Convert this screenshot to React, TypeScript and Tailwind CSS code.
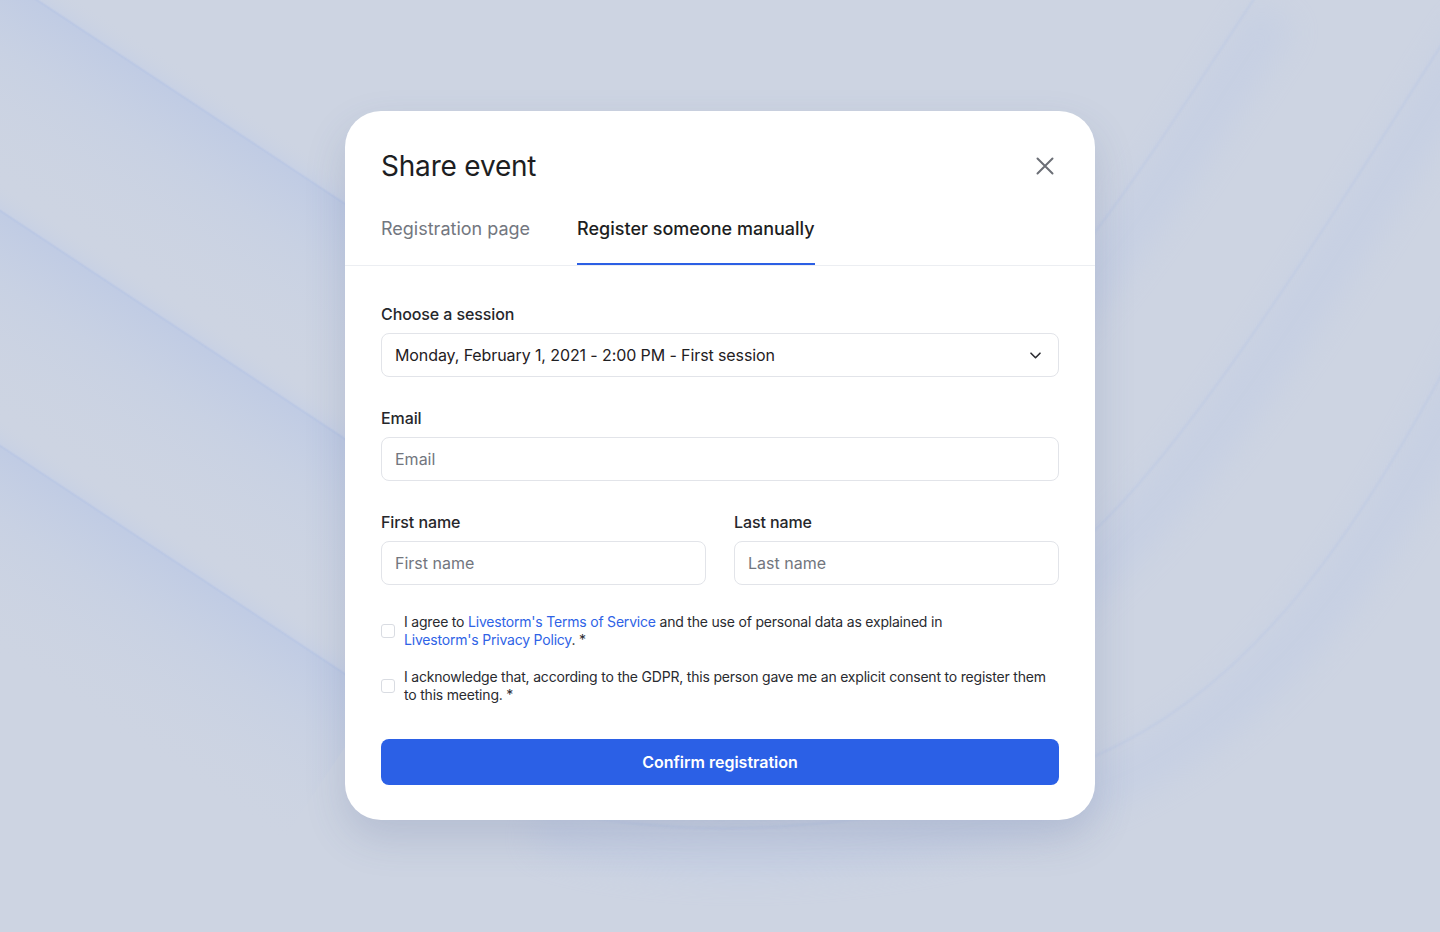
import { useState } from 'react'

const FONT = { fontFamily: 'Inter, "Noto Sans", sans-serif' }

function Backdrop() {
  return (
    <svg className="absolute inset-0 h-full w-full" viewBox="0 0 1440 932" preserveAspectRatio="none">
      <defs>
        <linearGradient id="band" x1="0" y1="0" x2="0" y2="1">
          <stop offset="0" stopColor="#b3c3e6" stopOpacity="0.5" />
          <stop offset="0.35" stopColor="#bccae6" stopOpacity="0.28" />
          <stop offset="1" stopColor="#cdd4e2" stopOpacity="0" />
        </linearGradient>
        <linearGradient id="ledge" x1="0" y1="0" x2="0" y2="1">
          <stop offset="0" stopColor="#cdd4e2" stopOpacity="0" />
          <stop offset="1" stopColor="#c4cfe6" stopOpacity="0.6" />
        </linearGradient>
        <filter id="soft" x="-20%" y="-20%" width="140%" height="140%">
          <feGaussianBlur stdDeviation="16" />
        </filter>
        <filter id="hair" x="-5%" y="-5%" width="110%" height="110%">
          <feGaussianBlur stdDeviation="0.8" />
        </filter>
      </defs>

      {/* left diagonal sheets */}
      <g transform="rotate(33.5)">
        {[-21, 175, 371].map(y => (
          <g key={y}>
            <rect x={-400} y={y - 24} width={1100} height={24} fill="url(#ledge)" />
            <rect x={-400} y={y} width={1100} height={180} fill="url(#band)" />
            <rect x={-400} y={y} width={1100} height={1.2} fill="#aebfe4" opacity="0.65" filter="url(#hair)" />
          </g>
        ))}
      </g>

      {/* right sweeping curves */}
      {[
        'M 900 420 C 1000 350 1060 280 1095 232 C 1150 160 1200 80 1260 -10',
        'M 700 760 C 900 720 1000 620 1095 530 C 1200 430 1330 220 1470 0',
        'M 520 800 C 650 845 900 840 1095 756 C 1250 690 1370 530 1500 260',
      ].map(d => (
        <g key={d}>
          <path d={d} fill="none" stroke="#b9c7e6" strokeWidth="50" opacity="0.3" filter="url(#soft)" transform="translate(16 24)" />
          <path d={d} fill="none" stroke="#b2c2e4" strokeWidth="1.2" opacity="0.6" filter="url(#hair)" />
        </g>
      ))}
    </svg>
  )
}

function Label({ children }: { children: React.ReactNode }) {
  return <div className="text-base leading-6 font-medium tracking-[-0.1px] text-[#26272b]">{children}</div>
}

function TextInput({ placeholder }: { placeholder: string }) {
  return (
    <input
      placeholder={placeholder}
      className="mt-[7px] h-[44px] w-full rounded-lg border border-[#e2e4e9] bg-white pl-[13px] text-base text-[#1f2023] outline-none placeholder:text-[#72767e]"
      style={FONT}
    />
  )
}

function Check({ children }: { children: React.ReactNode }) {
  return (
    <label className="flex items-center gap-[9px]">
      <span className="h-[14px] w-[14px] shrink-0 rounded-[3px] border border-[#d9dce2] bg-white" />
      <span className="text-sm leading-[18px] tracking-[-0.2px] text-[#2a2b30]">{children}</span>
    </label>
  )
}

export default function App() {
  const [tab, setTab] = useState(1)
  const tabs = ['Registration page', 'Register someone manually']

  return (
    <div className="relative flex h-[932px] w-full items-start justify-center overflow-hidden bg-[#cdd4e2] pt-[111px]" style={FONT}>
      <Backdrop />

      <div className="relative w-[750px] rounded-[36px] bg-white shadow-[0_18px_40px_rgba(70,90,140,0.18)]">
        <div className="border-b border-[#eceef2] px-9 pt-[38px]">
          <div className="flex items-center justify-between">
            <h1 className="text-[28px] leading-[34px] font-normal tracking-[-0.2px] text-[#1d1e22]">Share event</h1>
            <button className="mr-[2px] flex h-6 w-6 items-center justify-center text-[#6c6f76]">
              <svg width="18" height="18" viewBox="0 0 18 18" fill="none" stroke="currentColor" strokeWidth="2" strokeLinecap="round">
                <path d="M1.5 1.5l15 15M16.5 1.5l-15 15" />
              </svg>
            </button>
          </div>
          <div className="mt-[34px] flex gap-[47px]">
            {tabs.map((t, i) => (
              <button
                key={t}
                onClick={() => setTab(i)}
                className={`border-b-2 pb-[22px] text-lg leading-6 ${
                  tab === i ? 'border-[#2c5fe4] font-medium text-[#1d1e22]' : 'border-transparent text-[#73777f]'
                }`}
              >
                {t}
              </button>
            ))}
          </div>
        </div>

        <div className="px-9 pt-9 pb-[35px]">
          <Label>Choose a session</Label>
          <div className="mt-[7px] flex h-[44px] items-center justify-between rounded-lg border border-[#e2e4e9] pl-[13px] pr-[17px]">
            <span className="text-base tracking-[-0.1px] text-[#1f2023]">Monday, February 1, 2021 - 2:00 PM - First session</span>
            <svg width="11" height="7" viewBox="0 0 11 7" fill="none" stroke="#2a2b30" strokeWidth="1.6" strokeLinecap="round" strokeLinejoin="round">
              <path d="M1 1.2l4.5 4.5L10 1.2" />
            </svg>
          </div>

          <div className="mt-[29px]">
            <Label>Email</Label>
            <TextInput placeholder="Email" />
          </div>

          <div className="mt-[29px] grid grid-cols-2 gap-7">
            <div>
              <Label>First name</Label>
              <TextInput placeholder="First name" />
            </div>
            <div>
              <Label>Last name</Label>
              <TextInput placeholder="Last name" />
            </div>
          </div>

          <div className="mt-[28px]">
            <Check>
              I agree to <span className="whitespace-nowrap text-[#2f63e6]">Livestorm's Terms of Service</span> and the use of
              personal data as explained in <span className="whitespace-nowrap text-[#2f63e6]">Livestorm's Privacy Policy</span>. *
            </Check>
          </div>
          <div className="mt-[19px]">
            <Check>
              I acknowledge that, according to the GDPR, this person gave me an explicit consent to register them to this
              meeting. *
            </Check>
          </div>

          <button className="mt-[35px] flex h-[46px] w-full items-center justify-center rounded-lg bg-[#2b60e6] text-base font-semibold text-white">
            Confirm registration
          </button>
        </div>
      </div>
    </div>
  )
}
